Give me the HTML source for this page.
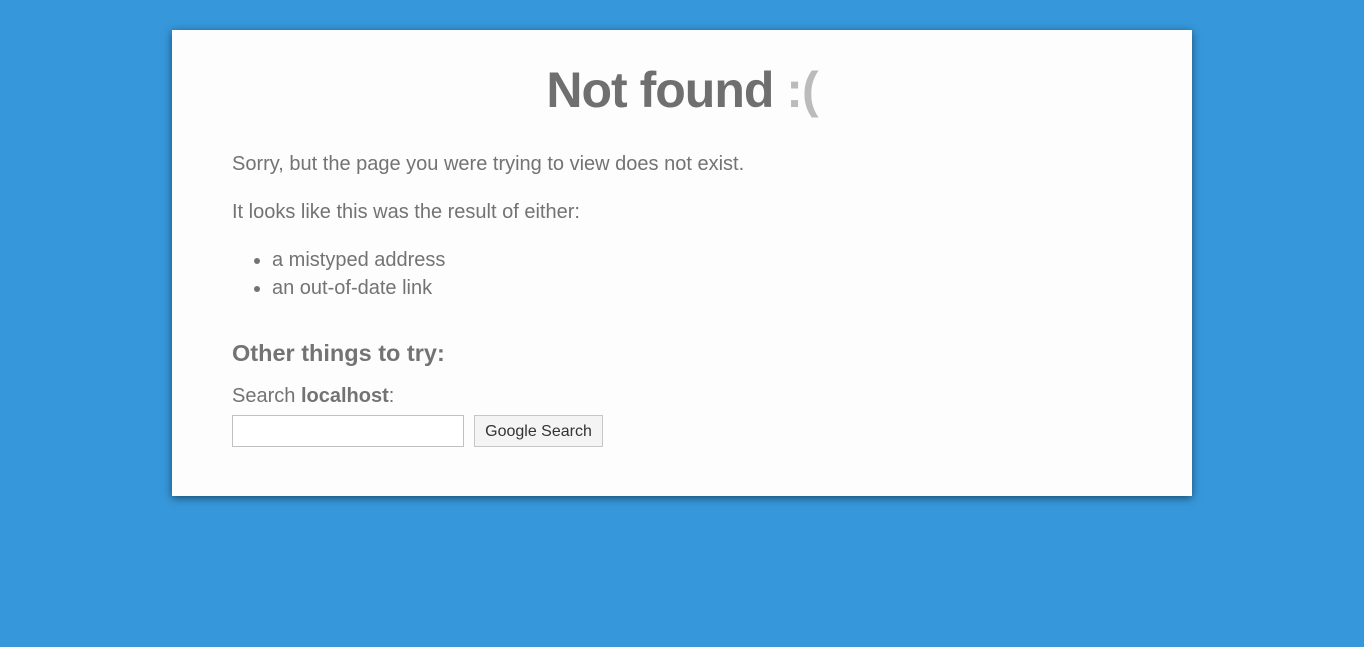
<!DOCTYPE html>
<html><head><style>
body{margin:0;background:#3697db;width:1364px;height:647px;overflow:hidden;font-family:"Liberation Sans",sans-serif;color:#737373;}
.box{position:absolute;left:172px;top:30px;width:1020px;height:466px;background:#fdfdfd;box-shadow:0 2px 8px rgba(0,0,0,.5);}
h1{position:absolute;left:0;width:1020px;top:32px;margin:0;text-align:center;font-size:50px;line-height:56px;font-weight:bold;color:#6f6f6f;letter-spacing:-1px;font-family:"Comic Sans MS","Liberation Sans",sans-serif;}
h1 span{color:#bbb}
.t{position:absolute;left:60px;font-size:20px;line-height:28px;margin:0;white-space:nowrap}
ul{position:absolute;left:60px;top:216px;margin:0;padding-left:40px;font-size:20px;line-height:28px}
h3{position:absolute;left:60px;top:308px;margin:0;font-size:23.5px;font-weight:bold;line-height:30px}
input{position:absolute;left:60px;top:385px;width:230px;height:30px;border:1px solid #c0c0c0;margin:0;padding:0;background:#fff;box-sizing:content-box}
button{position:absolute;left:302px;top:385px;width:129px;height:32px;border:1px solid #c6c6c6;background:#f4f4f4;font-family:"Liberation Sans",sans-serif;font-size:16px;color:#333;padding:2px 0 0}
</style></head><body>
<div class="box">
<h1>Not found <span>:(</span></h1>
<p class="t" style="top:120px">Sorry, but the page you were trying to view does not exist.</p>
<p class="t" style="top:168px">It looks like this was the result of either:</p>
<ul><li>a mistyped address</li><li>an out-of-date link</li></ul>
<h3>Other things to try:</h3>
<p class="t" style="top:352px">Search <b>localhost</b>:</p>
<input type="text"><button>Google Search</button>
</div>
</body></html>
